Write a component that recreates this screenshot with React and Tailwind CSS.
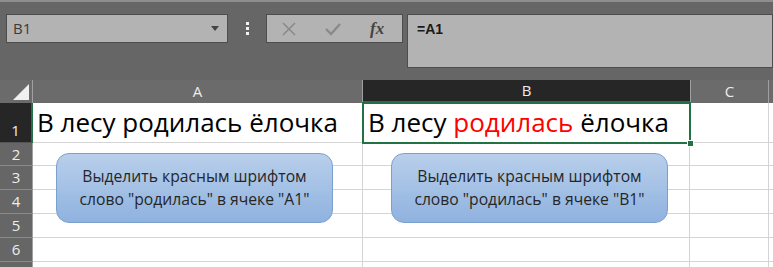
import React from 'react';

const font = { fontFamily: '"Open Sans", "Liberation Sans", sans-serif' };

const rows = [
  { n: 1, h: 'h-[40px]' },
  { n: 2, h: 'h-[23px]' },
  { n: 3, h: 'h-[24px]' },
  { n: 4, h: 'h-[24px]' },
  { n: 5, h: 'h-[24px]' },
  { n: 6, h: 'h-[24px]' },
  { n: 7, h: 'h-[24px]' },
];

const Shape = ({ cell }) => (
  <div className="absolute top-[73px] h-[70px] w-[277px] rounded-[13px] border border-[#7aa0cf] bg-gradient-to-b from-[#b9cfeb] to-[#8fb2df] flex items-center justify-center text-center text-[15.7px] leading-[23px] text-[#262626]">
    <div>
      Выделить красным шрифтом
      <br />
      слово "родилась" в ячеке "{cell}"
    </div>
  </div>
);

const App = () => {
  return (
    <div className="w-[773px] h-[267px] overflow-hidden bg-white relative" style={font}>
      {/* ribbon / formula bar */}
      <div className="h-[80px] bg-[#666666] border-t-[2px] border-[#8e8e8e] flex items-start pt-[12px] pl-[6px]">
        <div className="w-[222px] h-[29px] bg-[#b3b3b3] border border-[#4d4d4d] flex items-center justify-between pl-[6px] pr-[8px] text-[15px] text-[#3a3a3a]">
          <span>B1</span>
          <svg width="8" height="5" viewBox="0 0 8 5"><path d="M0 0h8L4 5z" fill="#444" /></svg>
        </div>
        <div className="w-[38px] h-[29px] flex flex-col items-center justify-center gap-[2px]">
          <div className="w-[3px] h-[3px] bg-[#f2f2f2]" />
          <div className="w-[3px] h-[3px] bg-[#f2f2f2]" />
          <div className="w-[3px] h-[3px] bg-[#f2f2f2]" />
        </div>
        <div className="w-[137px] h-[29px] bg-[#b3b3b3] border border-[#4d4d4d] flex items-center justify-around pr-[4px]">
          <svg width="16" height="16" viewBox="0 0 16 16"><path d="M2 2l12 12M14 2L2 14" stroke="#8a8a8a" strokeWidth="1.6" /></svg>
          <svg width="18" height="16" viewBox="0 0 18 16"><path d="M2 8l5 5L16 3" stroke="#8a8a8a" strokeWidth="2.4" fill="none" /></svg>
          <span className="italic font-bold text-[17px] text-[#444]" style={{ fontFamily: '"Liberation Serif", serif' }}>fx</span>
        </div>
        <div className="ml-[4px] flex-1 h-[54px] bg-[#b3b3b3] border border-[#4d4d4d] pl-[9px] pt-[4px] text-[14px] font-bold text-[#1a1a1a]" style={{ fontFamily: '"Liberation Sans", sans-serif' }}>
          =A1
        </div>
      </div>

      {/* sheet */}
      <div className="relative">
        <div className="flex h-[23px] bg-[#6b6b6b] text-[15px] text-[#ededed]">
          <div className="w-[33px] h-full relative border-r border-[#a0a0a0]">
            <svg className="absolute right-[3px] bottom-[3px]" width="16" height="16" viewBox="0 0 16 16"><path d="M16 0V16H0z" fill="#f0f0f0" /></svg>
          </div>
          <div className="w-[330px] flex items-center justify-center border-r border-[#a0a0a0]">A</div>
          <div className="w-[327px] flex items-center justify-center bg-[#262626] border-b-[2px] border-[#217346]">B</div>
          <div className="w-[79px] flex items-center justify-center border-r border-[#a0a0a0] border-l border-l-[#a0a0a0]">C</div>
          <div className="flex-1" />
        </div>

        {rows.map((r) => (
          <div key={r.n} className={`flex ${r.h}`}>
            <div
              className={`w-[33px] flex justify-center text-[15px] text-[#ededed] border-b ${
                r.n === 1
                  ? 'items-end pb-[1px] bg-[#262626] border-r-[2px] border-r-[#217346] border-b-[#555]'
                  : 'items-center bg-[#666666] border-r border-r-[#a0a0a0] border-b-[#8a8a8a]'
              }`}
            >
              {r.n < 7 ? r.n : ''}
            </div>
            <div className="w-[330px] border-b border-r border-[#d4d4d4] flex items-center pl-[4px] text-[26px] text-black">
              {r.n === 1 ? 'В лесу родилась ёлочка' : ''}
            </div>
            <div className="w-[327px] border-b border-r border-[#d4d4d4] flex items-center pl-[5px] text-[26px] text-black">
              {r.n === 1 ? (
                <span>
                  В лесу <span className="text-[#ff0000]">родилась</span> ёлочка
                </span>
              ) : (
                ''
              )}
            </div>
            <div className="w-[79px] border-b border-r border-[#d4d4d4]" />
            <div className="flex-1 border-b border-[#d4d4d4]" />
          </div>
        ))}

        {/* selection B1 */}
        <div className="absolute left-[362px] top-[22px] w-[329px] h-[42px] border-[2px] border-[#217346] pointer-events-none">
          <div className="absolute -right-[5px] -bottom-[5px] w-[7px] h-[7px] bg-[#217346] border border-white" />
        </div>

        <div className="absolute left-[56px] top-0 w-0 h-0">
          <Shape cell="A1" />
        </div>
        <div className="absolute left-[391px] top-0 w-0 h-0">
          <Shape cell="B1" />
        </div>
      </div>
    </div>
  );
};

export default App;
